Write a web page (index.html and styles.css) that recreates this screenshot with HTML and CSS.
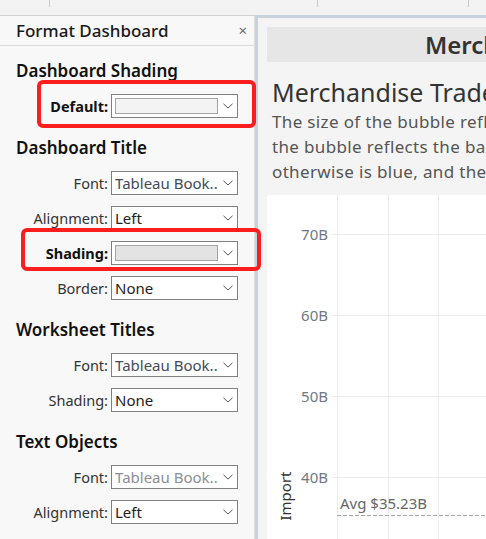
FILE: index.html
```html
<!DOCTYPE html>
<html lang="en">
<head>
<meta charset="utf-8">
<title>Format Dashboard</title>
<link rel="stylesheet" href="styles.css">
</head>
<body>
<div class="topbar">
  <div class="tab tab-a"></div>
  <div class="tab tab-b"></div>
  <div class="tab tab-c"></div>
</div>
<div class="main">
  <aside class="panel">
    <header class="panel-head">
      <span class="panel-title">Format Dashboard</span>
      <span class="close">×</span>
    </header>
    <div class="panel-body">
      <section class="group">
        <h2 class="group-title">Dashboard Shading</h2>
        <div class="row">
          <span class="label bold">Default:</span>
          <div class="select"><span class="swatch swatch-light"></span><svg class="chev" width="10" height="6" viewBox="0 0 10 6"><path d="M0.5 0.8 L5 5 L9.5 0.8" fill="none" stroke="#555" stroke-width="1"/></svg></div>
          <span class="highlight hl-default"></span>
        </div>
      </section>
      <section class="group">
        <h2 class="group-title">Dashboard Title</h2>
        <div class="row">
          <span class="label">Font:</span>
          <div class="select"><span class="value font-value">Tableau Book..</span><svg class="chev" width="10" height="6" viewBox="0 0 10 6"><path d="M0.5 0.8 L5 5 L9.5 0.8" fill="none" stroke="#555" stroke-width="1"/></svg></div>
        </div>
        <div class="row">
          <span class="label">Alignment:</span>
          <div class="select"><span class="value">Left</span><svg class="chev" width="10" height="6" viewBox="0 0 10 6"><path d="M0.5 0.8 L5 5 L9.5 0.8" fill="none" stroke="#555" stroke-width="1"/></svg></div>
        </div>
        <div class="row">
          <span class="label bold">Shading:</span>
          <div class="select"><span class="swatch swatch-grey"></span><svg class="chev" width="10" height="6" viewBox="0 0 10 6"><path d="M0.5 0.8 L5 5 L9.5 0.8" fill="none" stroke="#555" stroke-width="1"/></svg></div>
          <span class="highlight hl-shading"></span>
        </div>
        <div class="row">
          <span class="label">Border:</span>
          <div class="select"><span class="value">None</span><svg class="chev" width="10" height="6" viewBox="0 0 10 6"><path d="M0.5 0.8 L5 5 L9.5 0.8" fill="none" stroke="#555" stroke-width="1"/></svg></div>
        </div>
      </section>
      <section class="group">
        <h2 class="group-title">Worksheet Titles</h2>
        <div class="row">
          <span class="label">Font:</span>
          <div class="select"><span class="value font-value">Tableau Book..</span><svg class="chev" width="10" height="6" viewBox="0 0 10 6"><path d="M0.5 0.8 L5 5 L9.5 0.8" fill="none" stroke="#555" stroke-width="1"/></svg></div>
        </div>
        <div class="row">
          <span class="label">Shading:</span>
          <div class="select"><span class="value">None</span><svg class="chev" width="10" height="6" viewBox="0 0 10 6"><path d="M0.5 0.8 L5 5 L9.5 0.8" fill="none" stroke="#555" stroke-width="1"/></svg></div>
        </div>
      </section>
      <section class="group">
        <h2 class="group-title">Text Objects</h2>
        <div class="row">
          <span class="label">Font:</span>
          <div class="select"><span class="value font-value dim">Tableau Book..</span><svg class="chev" width="10" height="6" viewBox="0 0 10 6"><path d="M0.5 0.8 L5 5 L9.5 0.8" fill="none" stroke="#555" stroke-width="1"/></svg></div>
        </div>
        <div class="row">
          <span class="label">Alignment:</span>
          <div class="select"><span class="value">Left</span><svg class="chev" width="10" height="6" viewBox="0 0 10 6"><path d="M0.5 0.8 L5 5 L9.5 0.8" fill="none" stroke="#555" stroke-width="1"/></svg></div>
        </div>
      </section>
    </div>
  </aside>
  <main class="dash">
    <div class="dash-title">Merchandise Trade Dashboard</div>
    <h1 class="sheet-title">Merchandise Trade Balance</h1>
    <div class="desc">
      <div class="line">The size of the bubble reflects the total trade volume of each country.</div>
      <div class="line">the bubble reflects the balance of trade: the bubble is orange when there is a deficit,</div>
      <div class="line">otherwise is blue, and the position shows the exports and imports.</div>
    </div>
    <div class="chart">
      <svg class="plot" width="240" height="344" viewBox="0 0 240 344">
        <g stroke="#ececec" stroke-width="1">
          <line x1="70.5" y1="0" x2="70.5" y2="344"/>
          <line x1="121.5" y1="0" x2="121.5" y2="344"/>
          <line x1="171.5" y1="0" x2="171.5" y2="344"/>
          <line x1="222.5" y1="0" x2="222.5" y2="344"/>
          <line x1="64" y1="39.5" x2="240" y2="39.5"/>
          <line x1="64" y1="120.5" x2="240" y2="120.5"/>
          <line x1="64" y1="201.5" x2="240" y2="201.5"/>
          <line x1="64" y1="282.5" x2="240" y2="282.5"/>
        </g>
        <g class="tick-label" text-anchor="end">
          <text x="61" y="44.5">70B</text>
          <text x="61" y="125.5">60B</text>
          <text x="61" y="206.5">50B</text>
          <text x="61" y="287.5">40B</text>
        </g>
        <line x1="70" y1="320.5" x2="240" y2="320.5" stroke="#a8a8a8" stroke-width="1" stroke-dasharray="4 2"/>
        <text class="avg-label" x="73" y="314">Avg $35.23B</text>
        <text class="axis-title" transform="translate(24 301) rotate(-90)" text-anchor="middle">Import</text>
      </svg>
    </div>
  </main>
</div>
</body>
</html>
```

FILE: styles.css
```css
* { box-sizing: border-box; }
html, body { margin: 0; padding: 0; }
body {
  width: 486px;
  height: 539px;
  overflow: hidden;
  background: #f3f3f3;
  font-family: "Noto Sans", "Open Sans", sans-serif;
  color: #222;
}
.topbar {
  height: 15px;
  display: flex;
  background: #f3f3f3;
}
.tab { height: 7px; border-right: 1px solid #c9c9c9; }
.tab-a { width: 50px; }
.tab-b { width: 268px; }
.tab-c { width: 151px; }

.main {
  display: flex;
  height: 524px;
}
.panel {
  width: 255px;
  flex: none;
  background: #f8f8f8;
  border-top: 1px solid #d2d2d2;
  border-right: 1px solid #e0e0e0;
  position: relative;
  z-index: 2;
}
.panel-head {
  height: 30px;
  border-bottom: 1px solid #dcdcdc;
  display: flex;
  align-items: center;
  justify-content: space-between;
  padding: 0 7px 0 16px;
}
.panel-title {
  font-size: 17px;
  font-weight: 500;
  color: #1a1a1a;
}
.close {
  font-size: 15px;
  color: #6a6a6a;
  line-height: 1;
}
.panel-body { padding-top: 15px; }
.group + .group { margin-top: 20px; }
.group-title {
  margin: 0 0 13px 16px;
  font-size: 17px;
  line-height: 20px;
  font-weight: 600;
  color: #111;
}
.row {
  position: relative;
  display: flex;
  align-items: center;
  gap: 3px;
  height: 24px;
}
.row + .row { margin-top: 11px; }
.label {
  width: 108px;
  text-align: right;
  font-size: 14.5px;
  color: #333;
}
.label.bold { font-weight: 700; color: #111; }
.select {
  width: 127px;
  height: 24px;
  border: 1px solid #808080;
  background: #fff;
  display: flex;
  align-items: center;
  padding: 0 4px 0 3px;
}
.value {
  flex: 1;
  font-size: 15px;
  color: #222;
  white-space: nowrap;
  overflow: hidden;
}
.font-value { color: #434a58; }
.font-value.dim { color: #8a8e96; }
.swatch {
  width: 103px;
  height: 16px;
  border: 1px solid #a3a3a3;
  margin-right: auto;
}
.swatch-light { background: #f3f3f3; }
.swatch-grey { background: #e3e3e3; }
.chev { flex: none; display: block; }

.highlight {
  position: absolute;
  border: 4px solid #fb1e1e;
  border-radius: 6px;
  pointer-events: none;
}
.hl-default { left: 37px; right: -2px; top: -14px; bottom: -10px; }
.hl-shading { left: 21px; right: -7px; top: -13px; bottom: -6px; }

.dash {
  flex: 1;
  min-width: 0;
  overflow: hidden;
  background: #f4f4f4;
  border-left: 3px solid #c8d2dc;
  border-top: 3px solid #c8d2dc;
  padding: 9px 0 0 9px;
  font-family: "Noto Sans", "Open Sans", sans-serif;
}
.dash-title {
  height: 35px;
  background: #e6e6e6;
  padding-left: 158px;
  font-size: 24px;
  line-height: 35px;
  font-weight: 600;
  color: #333;
  white-space: nowrap;
}
.sheet-title {
  margin: 15px 0 0 5px;
  font-size: 25px;
  line-height: 30px;
  font-weight: 400;
  color: #333;
  white-space: nowrap;
}
.desc {
  margin: 2px 0 0 5px;
  font-size: 17px;
  line-height: 25px;
  letter-spacing: 0.35px;
  color: #555;
}
.line { white-space: nowrap; }
.chart {
  margin-top: 11px;
  height: 344px;
  background: #fff;
}
.plot { display: block; }
.tick-label text {
  font-family: "Noto Sans", sans-serif;
  font-size: 15px;
  fill: #707883;
}
.avg-label {
  font-family: "Noto Sans", sans-serif;
  font-size: 15px;
  fill: #666;
}
.axis-title {
  font-family: "Noto Sans", sans-serif;
  font-size: 15px;
  fill: #333;
}
```
